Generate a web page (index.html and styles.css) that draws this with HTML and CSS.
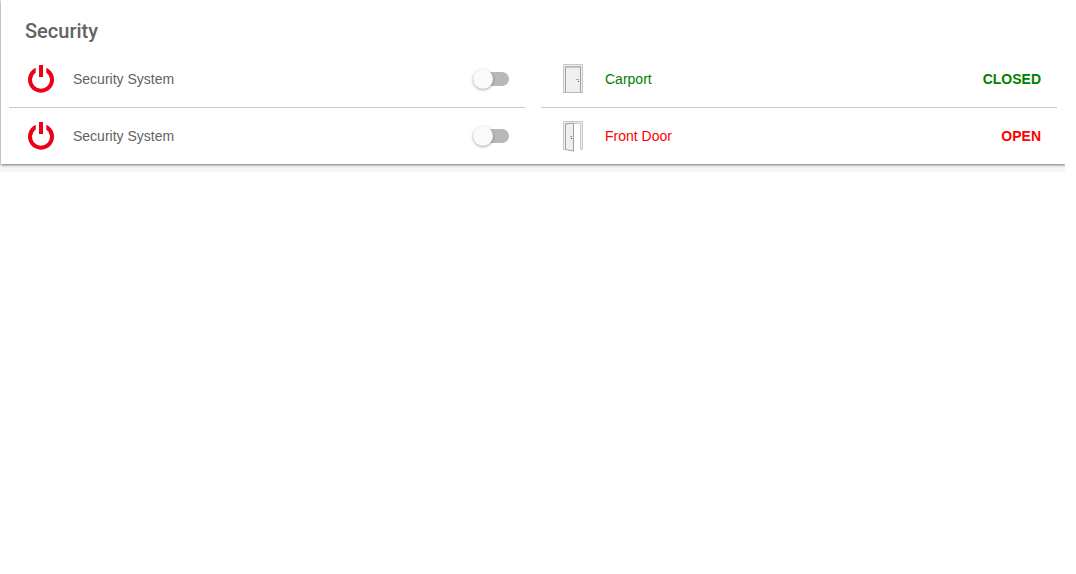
FILE: index.html
```html
<!DOCTYPE html>
<html lang="en">
<head>
<meta charset="utf-8">
<title>Security</title>
<link rel="stylesheet" href="styles.css">
</head>
<body>
<main class="page">
  <section class="card">
    <h1 class="title">Security</h1>
    <div class="columns">
      <div class="list">
        <div class="row">
          <svg class="icon" viewBox="0 0 32 32" aria-hidden="true"><path d="M10.700 4.800A13 13 0 1 0 21.300 4.800V9.400A9 9 0 1 1 10.700 9.400zM14 2h4v12h-4z" fill="#eb0018"/></svg>
          <label class="name" for="system-1">Security System</label>
          <input class="switch" id="system-1" type="checkbox" role="switch">
        </div>
        <div class="row">
          <svg class="icon" viewBox="0 0 32 32" aria-hidden="true"><path d="M10.700 4.800A13 13 0 1 0 21.300 4.800V9.400A9 9 0 1 1 10.700 9.400zM14 2h4v12h-4z" fill="#eb0018"/></svg>
          <label class="name" for="system-2">Security System</label>
          <input class="switch" id="system-2" type="checkbox" role="switch">
        </div>
      </div>
      <div class="list">
        <div class="row closed">
          <svg class="icon" viewBox="0 0 32 32" aria-hidden="true"><path d="M6.500 29.500v-28h19v28z" fill="#eee" stroke="#c8c8c8"/><path d="M8.500 29.500v-25.500h15v25.500z" fill="#efefef" stroke="#a2a2a2"/><path d="M8 3.500h16" stroke="#b5b5b5"/><path d="M6 29.500h20" stroke="#b9b9b9"/><path d="M19 16.500h3" stroke="#aaa"/><path d="M21 18h1v1h-1z" fill="#444"/></svg>
          <span class="name">Carport</span>
          <strong class="state">CLOSED</strong>
        </div>
        <div class="row open">
          <svg class="icon" viewBox="0 0 32 32" aria-hidden="true"><path d="M6.500 29.500v-28h19v28h-2v-26h-15v26z" fill="#eee" stroke="#c8c8c8"/><path d="M8.500 29.500V4l8-1v28z" fill="#efefef" stroke="#a2a2a2"/><path d="M13 16.500h2" stroke="#999"/><path d="M14 18h1v1h-1z" fill="#333"/></svg>
          <span class="name">Front Door</span>
          <strong class="state">OPEN</strong>
        </div>
      </div>
    </div>
  </section>
</main>
</body>
</html>
```
FILE: styles.css
```css
* {
  box-sizing: border-box;
}

body {
  margin: 0;
  background: #fff;
  color: #636363;
  font: 14px/20px "Liberation Sans", Arial, sans-serif;
}

.page {
  margin-right: 11px;
  padding: 0 0 8px 1px;
  background: #f5f5f5;
  overflow: hidden;
}

.card {
  background: #fff;
  box-shadow: 0 1px 3px 0 rgba(0, 0, 0, 0.3), 0 1px 2px 0 rgba(0, 0, 0, 0.3);
}

.title {
  margin: 0;
  padding: 19px 24px 8px;
  font: 500 20px/24px Roboto, sans-serif;
}

.columns {
  display: grid;
  grid-template-columns: 1fr 1fr;
  gap: 16px;
  padding: 0 8px;
}

.row {
  display: flex;
  align-items: center;
  gap: 16px;
  height: 56px;
  padding: 0 16px;
}

.row + .row {
  height: 57px;
  border-top: 1px solid #c8c8c8;
}

.icon {
  flex: none;
  width: 32px;
  height: 32px;
}

.name {
  flex: 1;
}

.closed {
  color: #008000;
}

.open {
  color: #f00;
}

.switch {
  appearance: none;
  display: flex;
  align-items: center;
  width: 36px;
  height: 14px;
  margin: 0;
  border-radius: 7px;
  background: #b8b8b8;
}

.switch::before {
  content: "";
  width: 20px;
  height: 20px;
  flex: none;
  border-radius: 50%;
  background: #fafafa;
  box-shadow: 0 1px 3px rgba(0, 0, 0, 0.35);
}

.switch:checked {
  justify-content: flex-end;
}
```
